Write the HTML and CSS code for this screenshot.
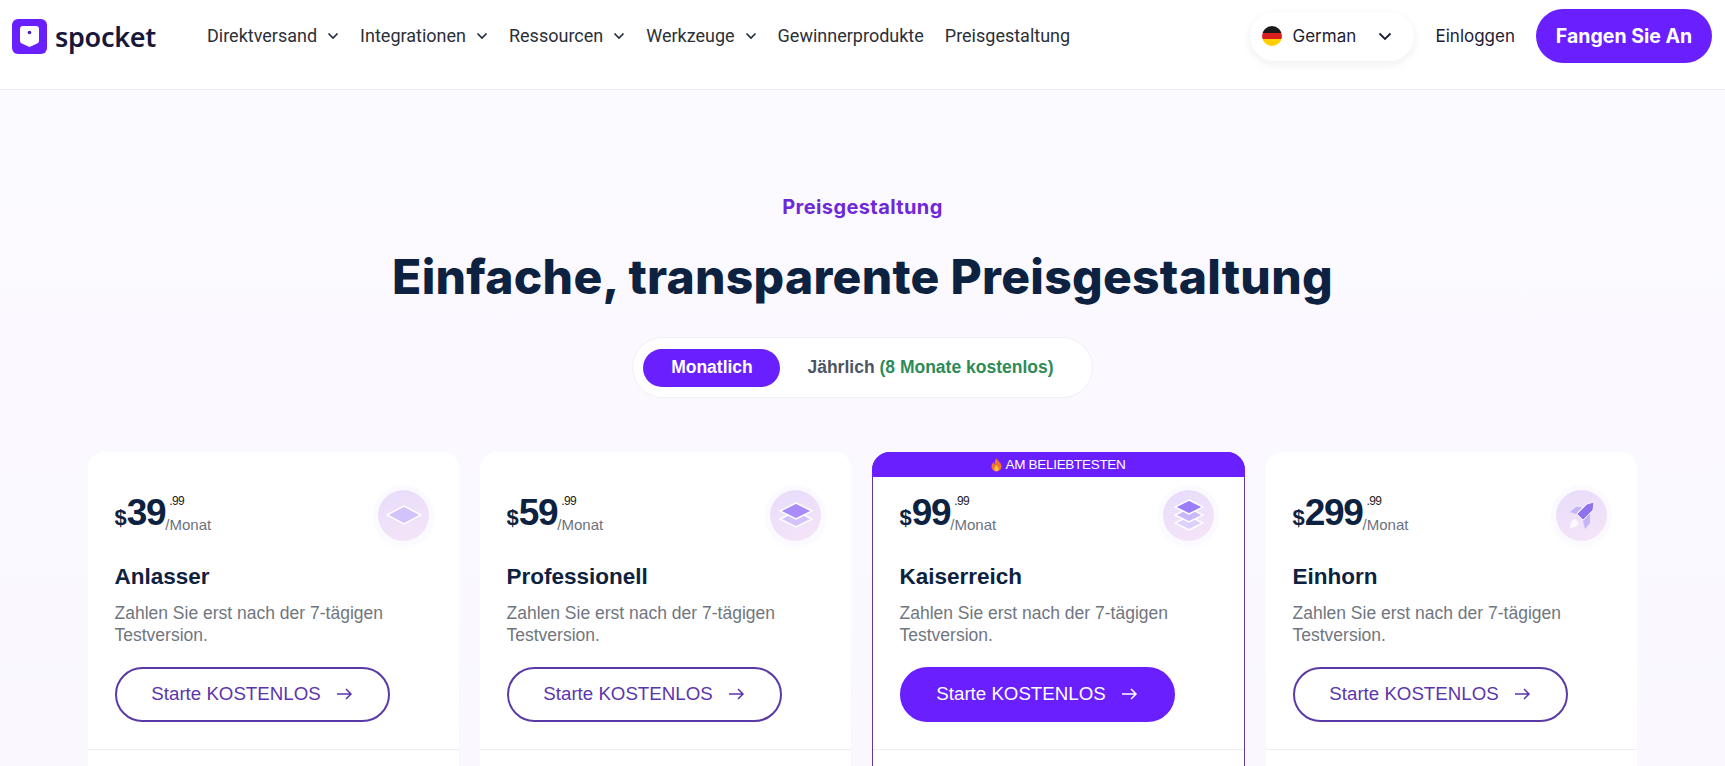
FILE: index.html
```html
<!DOCTYPE html>
<html lang="de">
<head>
    <meta charset="UTF-8">
    <meta name="viewport" content="width=device-width, initial-scale=1.0">
    <title>Spocket Preisgestaltung</title>
    <link rel="stylesheet" href="styles.css">
</head>
<body>
    <header class="topbar">
        <a class="logo" href="#">
            <svg class="logoMark" width="35" height="35" viewBox="0 0 35 35">
                <rect width="35" height="35" rx="6" fill="#6a1fff"/>
                <path d="M8 10q0-3 3-3h13q3 0 3 3v12q0 1.500-1.300 2.200l-7 3.300q-1.200.5-2.400 0l-7-3.300q-1.300-.7-1.300-2.200z" fill="#fff"/>
                <circle cx="17.500" cy="13.500" r="1.800" fill="#4a1fb8"/>
            </svg>
            <span class="logoText">spocket</span>
        </a>
        <nav class="mainNav">
            <a href="#">Direktversand<svg class="chev" width="12" height="8" viewBox="0 0 12 8"><path d="M1.500 1.500 6 6l4.500-4.500" fill="none" stroke="#1f2937" stroke-width="1.600"/></svg></a>
            <a href="#">Integrationen<svg class="chev" width="12" height="8" viewBox="0 0 12 8"><path d="M1.500 1.500 6 6l4.500-4.500" fill="none" stroke="#1f2937" stroke-width="1.600"/></svg></a>
            <a href="#">Ressourcen<svg class="chev" width="12" height="8" viewBox="0 0 12 8"><path d="M1.500 1.500 6 6l4.500-4.500" fill="none" stroke="#1f2937" stroke-width="1.600"/></svg></a>
            <a href="#">Werkzeuge<svg class="chev" width="12" height="8" viewBox="0 0 12 8"><path d="M1.500 1.500 6 6l4.500-4.500" fill="none" stroke="#1f2937" stroke-width="1.600"/></svg></a>
            <a href="#">Gewinnerprodukte</a>
            <a href="#">Preisgestaltung</a>
        </nav>
        <div class="topRight">
            <div class="langPick">
                <svg class="flag" width="20" height="20" viewBox="0 0 20 20">
                    <clipPath id="flagClip"><circle cx="10" cy="10" r="10"/></clipPath>
                    <g clip-path="url(#flagClip)">
                        <rect width="20" height="7" fill="#1a1a1a"/>
                        <rect y="7" width="20" height="6" fill="#d8201f"/>
                        <rect y="13" width="20" height="7" fill="#ffce00"/>
                    </g>
                </svg>
                <span>German</span>
                <svg class="langChev" width="14" height="9" viewBox="0 0 14 9"><path d="M1.500 1.500 7 7l5.500-5.500" fill="none" stroke="#1a1f36" stroke-width="1.800"/></svg>
            </div>
            <a class="login" href="#">Einloggen</a>
            <a class="startBtn" href="#">Fangen Sie An</a>
        </div>
    </header>

    <main class="pricing">
        <p class="eyebrow">Preisgestaltung</p>
        <h1>Einfache, transparente Preisgestaltung</h1>
        <div class="billing">
            <span class="billingOn">Monatlich</span>
            <span class="billingOff">Jährlich <em>(8 Monate kostenlos)</em></span>
        </div>

        <div class="plans">
            <article class="plan">
                <div class="planTop">
                    <div class="price"><span class="cur">$</span><span class="num">39</span><span class="side"><sup>.99</sup><small>/Monat</small></span></div>
                    <div class="planIcon">
                        <svg width="36" height="30" viewBox="0 0 36 30"><path d="M18 6 35 15 18 24 1 15z" fill="#d4c2fc" stroke="#fff" stroke-width="1.500"/></svg>
                    </div>
                </div>
                <h2>Anlasser</h2>
                <p class="desc">Zahlen Sie erst nach der 7-tägigen Testversion.</p>
                <a class="tryBtn" href="#">Starte KOSTENLOS<svg width="17" height="14" viewBox="0 0 17 14"><path d="M1 7h14M10 2l5 5-5 5" fill="none" stroke="currentColor" stroke-width="1.500"/></svg></a>
                <div class="planRule"></div>
            </article>

            <article class="plan">
                <div class="planTop">
                    <div class="price"><span class="cur">$</span><span class="num">59</span><span class="side"><sup>.99</sup><small>/Monat</small></span></div>
                    <div class="planIcon">
                        <svg width="36" height="30" viewBox="0 0 36 30">
                            <path d="M18 11 34 19 18 27 2 19z" fill="#d4c2fc" stroke="#fff" stroke-width="1.500"/>
                            <path d="M18 3 34 11 18 19 2 11z" fill="#a98bfa" stroke="#fff" stroke-width="1.500"/>
                        </svg>
                    </div>
                </div>
                <h2>Professionell</h2>
                <p class="desc">Zahlen Sie erst nach der 7-tägigen Testversion.</p>
                <a class="tryBtn" href="#">Starte KOSTENLOS<svg width="17" height="14" viewBox="0 0 17 14"><path d="M1 7h14M10 2l5 5-5 5" fill="none" stroke="currentColor" stroke-width="1.500"/></svg></a>
                <div class="planRule"></div>
            </article>

            <article class="plan planHot">
                <div class="hotBand">
                    <svg width="11" height="14" viewBox="0 0 11 14"><path d="M5.500 0c.5 2.500 5 4.500 5 8.500a5 5 0 0 1-10 0C.5 6.500 1.500 5 2.500 4c0 1.500.5 2.200 1.300 2.500C3.500 4 4 2 5.500 0z" fill="#f0762b"/><path d="M5.500 7c.3 1.200 2.200 2 2.200 4a2.200 2.200 0 0 1-4.400 0c0-1.500 1.800-2.500 2.200-4z" fill="#fbbf4d"/></svg>
                    AM BELIEBTESTEN
                </div>
                <div class="planTop">
                    <div class="price"><span class="cur">$</span><span class="num">99</span><span class="side"><sup>.99</sup><small>/Monat</small></span></div>
                    <div class="planIcon">
                        <svg width="30" height="32" viewBox="0 0 30 32">
                            <path d="M15 17 29 24 15 31 1 24z" fill="#ddd0fc" stroke="#fff" stroke-width="1.500"/>
                            <path d="M15 9 29 16 15 23 1 16z" fill="#cbb8fb" stroke="#fff" stroke-width="1.500"/>
                            <path d="M15 1 29 8 15 15 1 8z" fill="#9c7cf8" stroke="#fff" stroke-width="1.500"/>
                        </svg>
                    </div>
                </div>
                <h2>Kaiserreich</h2>
                <p class="desc">Zahlen Sie erst nach der 7-tägigen Testversion.</p>
                <a class="tryBtn tryBtnFull" href="#">Starte KOSTENLOS<svg width="17" height="14" viewBox="0 0 17 14"><path d="M1 7h14M10 2l5 5-5 5" fill="none" stroke="currentColor" stroke-width="1.500"/></svg></a>
                <div class="planRule"></div>
            </article>

            <article class="plan">
                <div class="planTop">
                    <div class="price"><span class="cur">$</span><span class="num">299</span><span class="side"><sup>.99</sup><small>/Monat</small></span></div>
                    <div class="planIcon">
                        <svg width="30" height="30" viewBox="0 0 30 30">
                            <path d="M3 12 9 7h6l-6 7z" fill="#c5b3fa"/>
                            <path d="M23 13v10l-5 6-2-8z" fill="#c5b3fa"/>
                            <path d="M27 2 26 10 16 20 10 14 20 4z" fill="#8f72ee" stroke="#fff" stroke-width=".8"/>
                            <path d="M8 19q-5 2-5 9 7 0 9-5z" fill="#fff" opacity=".75"/>
                        </svg>
                    </div>
                </div>
                <h2>Einhorn</h2>
                <p class="desc">Zahlen Sie erst nach der 7-tägigen Testversion.</p>
                <a class="tryBtn" href="#">Starte KOSTENLOS<svg width="17" height="14" viewBox="0 0 17 14"><path d="M1 7h14M10 2l5 5-5 5" fill="none" stroke="currentColor" stroke-width="1.500"/></svg></a>
                <div class="planRule"></div>
            </article>
        </div>
    </main>
</body>
</html>
```

FILE: styles.css
```css
*{margin:0;padding:0;box-sizing:border-box;}
html,body{
    height:100%;
    overflow:hidden;
    font-family:"Liberation Sans",Arial,sans-serif;
    background:linear-gradient(#fcfbff,#faf7ff);
}
a{
    color:inherit;
    text-decoration:none;
}

.topbar{
    display:flex;
    align-items:center;
    height:90px;
    padding:0 13px 17px 12px;
    background:#fff;
    border-bottom:1px solid #ebebef;
}

.logo{
    display:flex;
    align-items:center;
    gap:8px;
    width:195px;
}
.logoMark{
    flex:none;
}
.logoText{
    font-family:"Noto Sans",sans-serif;
    font-size:27px;
    font-weight:600;
    letter-spacing:-0.3px;
    line-height:35px;
    color:#17173a;
}

.mainNav{
    display:flex;
    align-items:center;
    gap:21px;
    margin-top:-1px;
    font-family:Roboto,sans-serif;
    font-size:18px;
    color:#2b2f38;
}
.mainNav a{
    display:flex;
    align-items:center;
}
.chev{
    margin-left:10px;
}

.topRight{
    display:flex;
    align-items:center;
    margin-left:auto;
}
.langPick{
    display:flex;
    align-items:center;
    width:164px;
    height:49px;
    padding:0 12px;
    border-radius:25px;
    background:#fff;
    box-shadow:0 3px 10px rgba(30,20,60,.07);
    font-family:Inter,sans-serif;
    font-size:17px;
    color:#1e2033;
}
.flag{
    margin-right:11px;
}
.langChev{
    margin-left:auto;
    margin-right:10px;
}
.login{
    margin-left:22px;
    font-family:Inter,sans-serif;
    font-size:17px;
    color:#1e2033;
}
.startBtn{
    display:flex;
    align-items:center;
    justify-content:center;
    width:176px;
    height:54px;
    margin-left:21px;
    border-radius:27px;
    background:#6a1fff;
    color:#fff;
    font-family:Inter,sans-serif;
    font-size:19.500px;
    font-weight:700;
}

.pricing{
    display:flex;
    flex-direction:column;
    align-items:center;
    padding-top:105px;
}
.eyebrow{
    font-family:Inter,sans-serif;
    font-size:20px;
    font-weight:700;
    letter-spacing:.4px;
    line-height:24px;
    color:#6d28d9;
}
h1{
    margin-top:29px;
    font-family:Inter,sans-serif;
    font-size:48px;
    font-weight:800;
    letter-spacing:.28px;
    line-height:58px;
    color:#0d2240;
}
.billing{
    display:flex;
    align-items:center;
    height:61px;
    margin-top:31px;
    padding:0 38px 0 10px;
    border:1px solid #f1eff5;
    border-radius:31px;
    background:#fff;
    font-size:17.500px;
    font-weight:700;
}
.billingOn{
    display:flex;
    align-items:center;
    justify-content:center;
    width:137px;
    height:38px;
    border-radius:19px;
    background:#6a1fff;
    color:#fff;
}
.billingOff{
    margin-left:27px;
    color:#4b5563;
}
.billingOff em{
    font-style:normal;
    color:#2e8b57;
}

.plans{
    display:grid;
    grid-template-columns:371px 371px 373px 371px;
    gap:21px;
    align-self:flex-start;
    margin:54px 0 0 88px;
}
.plan{
    height:340px;
    padding:33px 30px 0 26.500px;
    border-radius:16px;
    background:#fff;
}
.planTop{
    display:flex;
    justify-content:space-between;
    align-items:center;
    height:60px;
}
.planHot{
    padding:0 30px 0 26.500px;
    border:1px solid #5f3a9f;
    border-radius:18px 18px 0 0;
}
.hotBand{
    display:flex;
    align-items:center;
    justify-content:center;
    gap:3px;
    height:25px;
    margin:-1px -31px 8px -27.500px;
    border-radius:18px 18px 0 0;
    background:#6a1fff;
    color:#fff;
    font-size:13.500px;
    letter-spacing:-0.300px;
}

.price{
    display:flex;
    align-items:center;
    color:#0d2240;
    font-weight:700;
}
.cur{
    font-size:22px;
    margin-top:6px;
}
.num{
    margin-top:-4px;
    font-size:37px;
    letter-spacing:-1.300px;
    line-height:42px;
}
.side{
    display:flex;
    flex-direction:column;
    margin-top:-3px;
    font-weight:400;
}
.side sup{
    margin-left:4px;
    font-size:12px;
    letter-spacing:-0.700px;
    line-height:14px;
    color:#222;
}
.side small{
    margin-top:8px;
    font-size:15px;
    line-height:18px;
    color:#6b7280;
}

.planIcon{
    display:flex;
    align-items:center;
    justify-content:center;
    width:51px;
    height:51px;
    border-radius:50%;
    background:linear-gradient(160deg,#e8dcfb,#f5e5f8);
    box-shadow:0 0 0 5px #fbfaff,0 3px 10px rgba(90,60,180,.06);
}

h2{
    margin-top:18px;
    font-size:22.500px;
    line-height:28px;
    font-weight:700;
    color:#0d2240;
}
.desc{
    margin-top:11px;
    max-width:300px;
    font-size:17.500px;
    line-height:22px;
    color:#70767f;
}
.tryBtn{
    display:flex;
    align-items:center;
    justify-content:center;
    gap:15px;
    width:275px;
    height:55px;
    margin-top:21px;
    padding-bottom:2px;
    border:2px solid #5b3aa8;
    border-radius:28px;
    color:#5b35ad;
    font-size:18.700px;
}
.tryBtnFull{
    border-color:#6a1fff;
    background:#6a1fff;
    color:#fff;
}
.planRule{
    height:1px;
    margin:27px -30px 0 -26.500px;
    background:#eeeeef;
}
```
